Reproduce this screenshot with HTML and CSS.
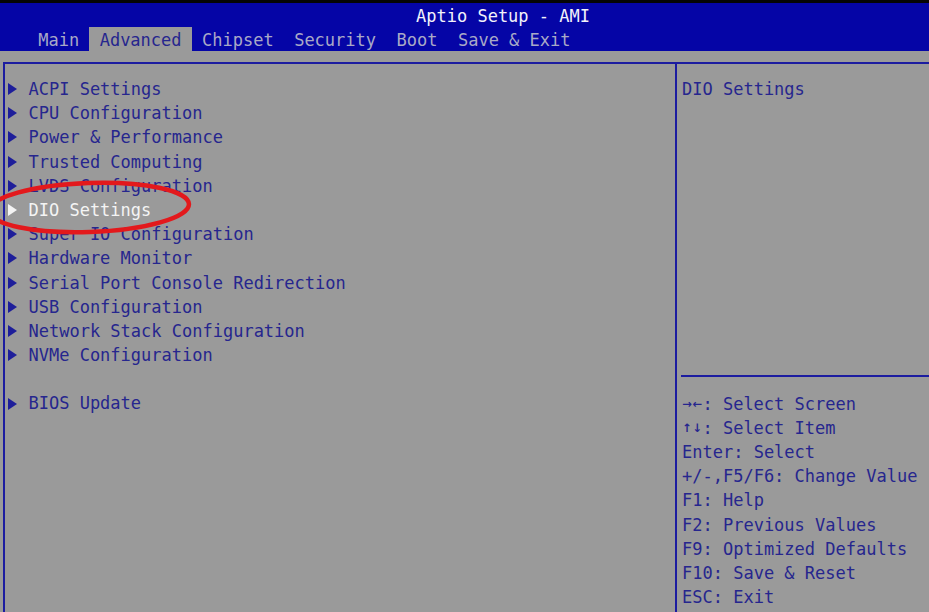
FILE: index.html
```html
<!DOCTYPE html>
<html lang="en">
<head>
<meta charset="utf-8">
<title>Aptio Setup - AMI</title>
<link rel="stylesheet" href="styles.css">
</head>
<body>
<div class="screen">
  <div class="topbar"></div>
  <header class="header">
    <div class="title">Aptio Setup - AMI</div>
    <nav class="tabs">
      <span class="tab">Main</span>
      <span class="tab active">Advanced</span>
      <span class="tab">Chipset</span>
      <span class="tab">Security</span>
      <span class="tab">Boot</span>
      <span class="tab">Save &amp; Exit</span>
    </nav>
  </header>
  <main class="frame">
    <section class="menu">
      <div class="item"><span class="tri"></span>ACPI Settings</div>
      <div class="item"><span class="tri"></span>CPU Configuration</div>
      <div class="item"><span class="tri"></span>Power &amp; Performance</div>
      <div class="item"><span class="tri"></span>Trusted Computing</div>
      <div class="item"><span class="tri"></span>LVDS Configuration</div>
      <div class="item selected"><span class="tri"></span>DIO Settings</div>
      <div class="item"><span class="tri"></span>Super IO Configuration</div>
      <div class="item"><span class="tri"></span>Hardware Monitor</div>
      <div class="item"><span class="tri"></span>Serial Port Console Redirection</div>
      <div class="item"><span class="tri"></span>USB Configuration</div>
      <div class="item"><span class="tri"></span>Network Stack Configuration</div>
      <div class="item"><span class="tri"></span>NVMe Configuration</div>
      <div class="item blank"></div>
      <div class="item"><span class="tri"></span>BIOS Update</div>
    </section>
    <aside class="help">
      <div class="desc">DIO Settings</div>
      <div class="keys">
        <div class="key"><span class="arr">→</span><span class="arr">←</span>: Select Screen</div>
        <div class="key"><span class="arr">↑</span><span class="arr">↓</span>: Select Item</div>
        <div class="key">Enter: Select</div>
        <div class="key">+/-,F5/F6: Change Value</div>
        <div class="key">F1: Help</div>
        <div class="key">F2: Previous Values</div>
        <div class="key">F9: Optimized Defaults</div>
        <div class="key">F10: Save &amp; Reset</div>
        <div class="key">ESC: Exit</div>
      </div>
    </aside>
  </main>
  <svg class="annot" width="929" height="612" viewBox="0 0 929 612" aria-hidden="true">
    <ellipse cx="89" cy="207.5" rx="100" ry="24.5" transform="rotate(-2 89 207.5)" fill="none" stroke="#e3191c" stroke-width="4.5"/>
  </svg>
</div>
</body>
</html>
```
FILE: styles.css
```css
html, body {
  margin: 0;
  padding: 0;
  background: #9a9a9a;
}
body {
  width: 929px;
  height: 612px;
  overflow: hidden;
  font-family: "DejaVu Sans Mono", "Liberation Mono", monospace;
  font-size: 17px;
  color: #26268e;
}
.screen {
  position: relative;
  width: 929px;
  height: 612px;
  overflow: hidden;
  background: #9a9a9a;
}
.topbar {
  height: 3px;
  background: #050505;
}
.header {
  background: #0505a6;
  height: 48px;
}
.title {
  height: 24px;
  box-sizing: border-box;
  padding-top: 3px;
  line-height: 21px;
  padding-left: 416px;
  color: #f2f2fa;
  white-space: pre;
}
.tabs {
  display: flex;
  height: 24px;
  padding-left: 28px;
}
.tab {
  box-sizing: border-box;
  padding: 2px 1ch 0;
  line-height: 22px;
  color: #a9a9c6;
  white-space: pre;
}
.tab.active {
  background: #9a9a9a;
  color: #26268e;
}
.frame {
  display: flex;
  margin-top: 11px;
  margin-left: 3px;
  border-top: 2px solid #1c1ca0;
  border-left: 2px solid #1c1ca0;
  height: 560px;
}
.menu {
  width: 670px;
  box-sizing: border-box;
  padding: 13px 0 0 3px;
}
.item {
  display: flex;
  align-items: center;
  height: 24.2px;
  line-height: 24.2px;
  white-space: pre;
}
.tri {
  width: 2ch;
  height: 12px;
  flex: none;
  position: relative;
}
.tri::before {
  content: "";
  position: absolute;
  left: 0;
  top: 0;
  border-top: 6px solid transparent;
  border-bottom: 6px solid transparent;
  border-left: 9px solid #1e1e9a;
}
.item.selected {
  color: #f4f4f4;
}
.item.selected .tri::before {
  border-left-color: #f4f4f4;
}
.help {
  flex: 1;
  border-left: 2px solid #1c1ca0;
  display: flex;
  flex-direction: column;
}
.desc {
  height: 313px;
  box-sizing: border-box;
  padding: 13px 0 0 1px;
  line-height: 24.2px;
  margin-left: 4px;
  border-bottom: 2px solid #1c1ca0;
}
.keys {
  padding: 14.6px 0 0 5px;
}
.key {
  height: 24.2px;
  line-height: 24.2px;
  white-space: pre;
}
.arr {
  display: inline-block;
  width: 10.23px;
  text-align: center;
  font-family: "DejaVu Sans", sans-serif;
  font-weight: bold;
  font-size: 11.5px;
  line-height: 24.2px;
  vertical-align: top;
}
.annot {
  position: absolute;
  left: 0;
  top: 0;
  pointer-events: none;
}
```
